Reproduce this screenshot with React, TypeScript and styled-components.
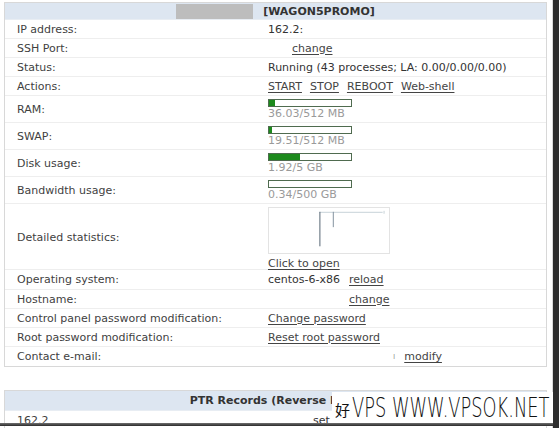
import React from 'react'
import styled, { createGlobalStyle } from 'styled-components'

const GlobalStyle = createGlobalStyle`
  *, *::before, *::after {
    box-sizing: border-box;
  }
  html, body {
    margin: 0;
    padding: 0;
    background: #ffffff;
  }
  body {
    font-family: "DejaVu Sans", Verdana, sans-serif;
    font-size: 11px;
    color: #3f3f3f;
  }
`

const Frame = styled.div`
  position: relative;
  width: 559px;
  height: 428px;
  overflow: hidden;
  padding: 2px 6px 0 4px;
  background: #ffffff;
  border-right: 6px solid #2e2e2e;
  box-shadow: inset -1px 0 0 #dadada;
`

const BottomEdge = styled.div`
  position: absolute;
  left: 0;
  right: 0;
  bottom: 2px;
  height: 3px;
  background: linear-gradient(#707070, #2a2a2a);
`

const Panel = styled.div`
  border: 1px solid #d8d8d8;
  background: #ffffff;
  & + & {
    margin-top: 23px;
  }
`

const Header = styled.div<{ $h: number }>`
  height: ${(p) => p.$h}px;
  background: #dde6f1;
  display: flex;
  align-items: center;
  justify-content: center;
  gap: 10px;
  font-weight: 700;
  color: #333;
  border-bottom: 1px solid #e8edf3;
`

const Redacted = styled.span`
  width: 77px;
  height: 15px;
  background: #bdbdbd;
`

const Row = styled.div<{ $h: number }>`
  display: grid;
  grid-template-columns: 263px 1fr;
  height: ${(p) => p.$h}px;
  border-bottom: 1px solid #eeeeee;
  &:last-child {
    border-bottom: none;
  }
`

const Label = styled.div`
  display: flex;
  align-items: center;
  padding-left: 12px;
  white-space: nowrap;
`

const Value = styled.div<{ $top?: boolean }>`
  display: flex;
  align-items: ${(p) => (p.$top ? 'flex-start' : 'center')};
  white-space: nowrap;
  color: #333;
`

const Stack = styled.div`
  display: flex;
  flex-direction: column;
  padding-top: 3px;
`

const Links = styled.div<{ $gap?: number; $indent?: number }>`
  display: flex;
  align-items: center;
  gap: ${(p) => p.$gap ?? 8}px;
  padding-left: ${(p) => p.$indent ?? 0}px;
`

const Link = styled.a`
  color: #444;
  text-decoration: underline;
  text-underline-offset: 2px;
  cursor: pointer;
`

const Bar = styled.div`
  width: 84px;
  height: 8px;
  border: 1px solid #4f6b4f;
  background: #ffffff;
`

const BarFill = styled.div`
  height: 100%;
  background: #1d8a1d;
`

const Usage = styled.span`
  color: #9a9a9a;
  line-height: 13px;
`

const Chart = styled.svg`
  display: block;
  width: 122px;
  height: 47px;
  border: 1px solid #e3e3e3;
  margin-bottom: 3px;
`

const Tick = styled.span`
  color: #999;
  font-size: 8px;
`

const Watermark = styled.div`
  position: absolute;
  right: 0;
  bottom: 5px;
  width: 221px;
  height: 31px;
  display: flex;
  align-items: center;
  padding-left: 3px;
  background: #ffffff;
  color: #111;
  overflow: hidden;
`

const MarkText = styled.span`
  display: inline-block;
  font-family: "DejaVu Sans", sans-serif;
  font-size: 26px;
  font-weight: 200;
  white-space: nowrap;
  transform: scaleX(0.685);
  transform-origin: left center;
`

const CJK = styled.span`
  font-family: "Noto Sans CJK SC", sans-serif;
  font-size: 15px;
  font-weight: 400;
  margin-right: 2px;
  padding-top: 3px;
`

const usage = [
  { label: 'RAM:', used: 36.03, total: 512, text: '36.03/512 MB' },
  { label: 'SWAP:', used: 19.51, total: 512, text: '19.51/512 MB' },
  { label: 'Disk usage:', used: 1.92, total: 5, text: '1.92/5 GB' },
  { label: 'Bandwidth usage:', used: 0.34, total: 500, text: '0.34/500 GB' },
]

export default function App() {
  return (
    <Frame>
      <GlobalStyle />
      <Panel>
        <Header $h={17}>
          <Redacted />
          <span>[WAGON5PROMO]</span>
        </Header>
        <Row $h={19}>
          <Label>IP address:</Label>
          <Value>162.2:</Value>
        </Row>
        <Row $h={19}>
          <Label>SSH Port:</Label>
          <Value>
            <Links $indent={24}>
              <Link>change</Link>
            </Links>
          </Value>
        </Row>
        <Row $h={19}>
          <Label>Status:</Label>
          <Value>Running (43 processes; LA: 0.00/0.00/0.00)</Value>
        </Row>
        <Row $h={19}>
          <Label>Actions:</Label>
          <Value>
            <Links>
              <Link>START</Link>
              <Link>STOP</Link>
              <Link>REBOOT</Link>
              <Link>Web-shell</Link>
            </Links>
          </Value>
        </Row>
        {usage.map((u) => (
          <Row $h={27} key={u.label}>
            <Label>{u.label}</Label>
            <Value $top>
              <Stack>
                <Bar>
                  <BarFill style={{ width: `${(u.used / u.total) * 100}%` }} />
                </Bar>
                <Usage>{u.text}</Usage>
              </Stack>
            </Value>
          </Row>
        ))}
        <Row $h={66}>
          <Label>Detailed statistics:</Label>
          <Value $top>
            <Stack>
              <Chart viewBox="0 0 122 47">
                <line x1="117" y1="4.5" x2="51" y2="4.5" stroke="#c4d0d6" strokeWidth="1" />
                <line x1="51.5" y1="4" x2="51.5" y2="40" stroke="#4d5f6e" strokeWidth="1" />
                <line x1="65.5" y1="4" x2="65.5" y2="20" stroke="#7d8d9b" strokeWidth="1" />
                <line x1="118.5" y1="3" x2="118.5" y2="6" stroke="#c4d0d6" strokeWidth="1" />
              </Chart>
              <Link>Click to open</Link>
            </Stack>
          </Value>
        </Row>
        <Row $h={20}>
          <Label>Operating system:</Label>
          <Value>
            <Links $gap={9}>
              <span>centos-6-x86</span>
              <Link>reload</Link>
            </Links>
          </Value>
        </Row>
        <Row $h={19}>
          <Label>Hostname:</Label>
          <Value>
            <Links $indent={81}>
              <Link>change</Link>
            </Links>
          </Value>
        </Row>
        <Row $h={19}>
          <Label>Control panel password modification:</Label>
          <Value>
            <Link>Change password</Link>
          </Value>
        </Row>
        <Row $h={19}>
          <Label>Root password modification:</Label>
          <Value>
            <Link>Reset root password</Link>
          </Value>
        </Row>
        <Row $h={19}>
          <Label>Contact e-mail:</Label>
          <Value>
            <Links $indent={125} $gap={9}>
              <Tick>ı</Tick>
              <Link>modify</Link>
            </Links>
          </Value>
        </Row>
      </Panel>
      <Panel>
        <Header $h={20}>
          <span>PTR Records (Reverse DNS)</span>
        </Header>
        <Row $h={19}>
          <Label>162.2</Label>
          <Value>
            <Links $indent={45}>
              <span>set new record</span>
            </Links>
          </Value>
        </Row>
      </Panel>
      <BottomEdge />
      <Watermark>
        <CJK>好</CJK>
        <MarkText>VPS WWW.VPSOK.NET</MarkText>
      </Watermark>
    </Frame>
  )
}
